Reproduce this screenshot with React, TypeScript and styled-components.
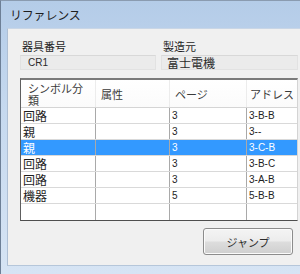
import styled, { createGlobalStyle } from "styled-components";

const GlobalStyle = createGlobalStyle`
  html, body {
    margin: 0;
    padding: 0;
    background: #ffffff;
  }
  body {
    font-family: "Noto Sans CJK JP", "Liberation Sans", sans-serif;
    font-size: 11px;
    color: #1e1e1e;
  }
`;

type Row = { kind: string; attr: string; page: string; address: string };

const rows: Row[] = [
  { kind: "回路", attr: "", page: "3", address: "3-B-B" },
  { kind: "親", attr: "", page: "3", address: "3--" },
  { kind: "親", attr: "", page: "3", address: "3-C-B" },
  { kind: "回路", attr: "", page: "3", address: "3-B-C" },
  { kind: "回路", attr: "", page: "3", address: "3-A-B" },
  { kind: "機器", attr: "", page: "5", address: "5-B-B" },
  { kind: "", attr: "", page: "", address: "" },
];

const selectedIndex = 2;

const App = () => {
  return (
    <>
      <GlobalStyle />
      <Window>
        <TitleBar>リファレンス</TitleBar>
        <Body>
          <Fields>
            <Field>
              <Label>器具番号</Label>
              <Value>CR1</Value>
            </Field>
            <Field>
              <Label>製造元</Label>
              <Value $large>富士電機</Value>
            </Field>
          </Fields>

          <Table>
            <HeaderRow>
              <HeadCell>
                <span>シンボル分</span>
                <span>類</span>
              </HeadCell>
              <HeadCell>属性</HeadCell>
              <HeadCell>ページ</HeadCell>
              <HeadCell>アドレス</HeadCell>
            </HeaderRow>
            {rows.map((row, i) => (
              <DataRow key={i} $selected={i === selectedIndex}>
                <Cell $jp>{row.kind}</Cell>
                <Cell>{row.attr}</Cell>
                <Cell>{row.page}</Cell>
                <Cell>{row.address}</Cell>
              </DataRow>
            ))}
          </Table>

          <Actions>
            <JumpButton>ジャンプ</JumpButton>
          </Actions>
        </Body>
      </Window>
    </>
  );
};

export default App;

const Window = styled.div`
  width: 300px;
  height: 274px;
  box-sizing: border-box;
  display: flex;
  flex-direction: column;
  border-top: 1px solid #8a9bb0;
  border-left: 1px solid #6d7f96;
  background: linear-gradient(to bottom, #b4cce8 0%, #c6d9ef 40%, #d6e4f4 100%);
  overflow: hidden;
`;

const TitleBar = styled.div`
  height: 27px;
  flex-shrink: 0;
  padding-left: 9px;
  display: flex;
  align-items: center;
  font-size: 12px;
  color: #1e1e1e;
  letter-spacing: -0.2px;
`;

const Body = styled.div`
  flex: 1;
  margin: 0 0 8px 6px;
  background: #f0f0f0;
  border-left: 1px solid #aebfd4;
  border-top: 1px solid #c9d6e6;
  border-bottom: 1px solid #b5c6da;
  display: flex;
  flex-direction: column;
  padding: 10px 0 0 12px;
`;

const Fields = styled.div`
  display: grid;
  grid-template-columns: 136px 137px;
  column-gap: 5px;
`;

const Field = styled.div`
  display: flex;
  flex-direction: column;
  gap: 2px;
`;

const Label = styled.div`
  padding-left: 2px;
  font-size: 11px;
  line-height: 14px;
`;

const Value = styled.div<{ $large?: boolean }>`
  height: 15px;
  box-sizing: border-box;
  border: 1px solid #e2e2e2;
  border-top-color: #d8d8d8;
  background: #ebebeb;
  padding-left: ${({ $large }) => ($large ? "5px" : "7px")};
  font-family: ${({ $large }) =>
    $large ? `"Noto Sans CJK JP", sans-serif` : `"Liberation Sans", sans-serif`};
  font-size: ${({ $large }) => ($large ? "12px" : "10px")};
  line-height: 13px;
  color: #2a2a2a;
`;

const Table = styled.div`
  margin-top: 8px;
  width: 278px;
  box-sizing: border-box;
  border-top: 2px solid #7a7a7a;
  border-left: 1px solid #5e5e5e;
  border-bottom: 1px solid #4e4e4e;
  border-right: 1px solid #d4d4d4;
  background: #ffffff;
`;

const columns = "75px 74px 77px 1fr";

const HeaderRow = styled.div`
  display: grid;
  grid-template-columns: ${columns};
  height: 27px;
  border-bottom: 1px solid #d5d5d5;
  background: linear-gradient(to bottom, #ffffff 0%, #fbfbfb 100%);
`;

const HeadCell = styled.div`
  display: flex;
  flex-direction: column;
  justify-content: center;
  padding-left: 5px;
  font-size: 11px;
  line-height: 12px;
  color: #3a3a3a;
  border-right: 1px solid #ececec;
  span {
    display: block;
  }
  &:first-child {
    padding-left: 7px;
  }
  &:last-child {
    border-right: none;
    padding-left: 3px;
  }
`;

const DataRow = styled.div<{ $selected?: boolean }>`
  display: grid;
  grid-template-columns: ${columns};
  height: 16px;
  box-sizing: border-box;
  border-bottom: 1px solid #d9d9d9;
  background: ${({ $selected }) => ($selected ? "#3399ff" : "#ffffff")};
  color: ${({ $selected }) => ($selected ? "#ffffff" : "#1e1e1e")};
  &:last-child {
    border-bottom: none;
  }
`;

const Cell = styled.div<{ $jp?: boolean }>`
  padding-left: 2px;
  border-right: 1px solid #a9a9a9;
  font-family: ${({ $jp }) =>
    $jp ? `"Noto Sans CJK JP", sans-serif` : `"Liberation Sans", sans-serif`};
  font-size: ${({ $jp }) => ($jp ? "12px" : "10px")};
  line-height: 15px;
  white-space: nowrap;
  overflow: hidden;
  &:last-child {
    border-right: none;
  }
`;

const Actions = styled.div`
  display: flex;
  justify-content: flex-start;
  padding-left: 183px;
  margin-top: 7px;
`;

const JumpButton = styled.button`
  width: 90px;
  height: 27px;
  border: 1px solid #8c8c8c;
  border-radius: 3px;
  background: linear-gradient(to bottom, #f4f4f4 0%, #ececec 48%, #dddddd 52%, #cfcfcf 100%);
  box-shadow: inset 0 0 0 1px #fbfbfb;
  font-family: "Noto Sans CJK JP", sans-serif;
  font-size: 11px;
  color: #2a2a2a;
  padding: 0;
  cursor: pointer;
`;
